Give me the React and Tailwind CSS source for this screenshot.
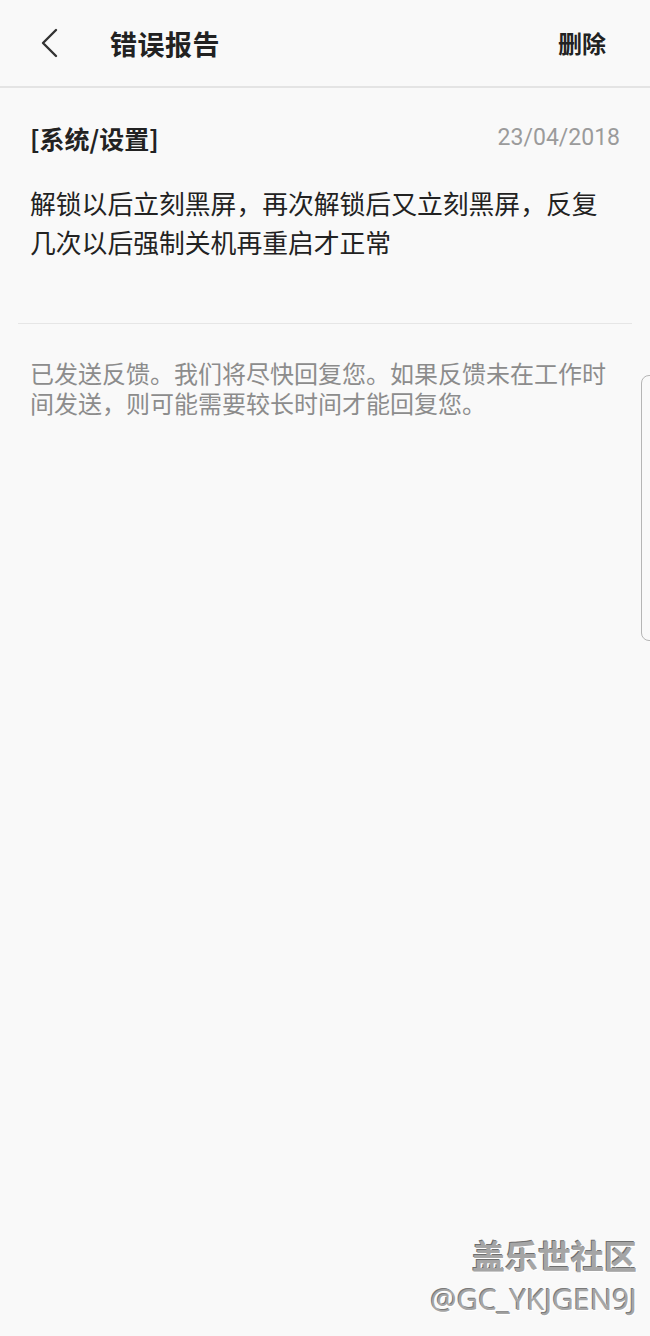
export default function App() {
  return (
    <div
      className="relative flex min-h-[1336px] w-[650px] flex-col overflow-hidden bg-[#f9f9f9] text-[#222]"
      style={{ fontFamily: '"Noto Sans CJK SC", "Noto Sans", sans-serif' }}
    >
      {/* Header */}
      <header className="flex h-[88px] items-center border-b-2 border-[#e4e4e4] pl-[38px] pr-[44px]">
        <svg width="22" height="32" viewBox="0 0 22 32" fill="none" className="-mt-[1px]">
          <path d="M18 3 L5 16 L18 29" stroke="#333" strokeWidth="2.4" strokeLinecap="round" strokeLinejoin="round" />
        </svg>
        <h1 className="ml-[50px] text-[27px] font-bold leading-none tracking-[0.5px] text-[#222]">错误报告</h1>
        <button className="ml-auto text-[24px] font-bold leading-none text-[#222]">删除</button>
      </header>

      {/* Report */}
      <section className="mx-[18px] border-b border-[#e6e6e6] px-[12px] pb-[62px] pt-[33px]">
        <div className="flex items-center justify-between">
          <span className="text-[25px] font-bold leading-[34px]">[系统/设置]</span>
          <span className="text-[23px] leading-[34px] text-[#9b9b9b]" style={{ fontFamily: 'Roboto, "Noto Sans", sans-serif' }}>
            23/04/2018
          </span>
        </div>
        <p className="mt-[28px] w-[580px] text-[25.8px] leading-[39px] text-[#222]">
          解锁以后立刻黑屏，再次解锁后又立刻黑屏，反复几次以后强制关机再重启才正常
        </p>
      </section>

      <p className="mt-[34px] w-[622px] pl-[30px] text-[24px] leading-[30px] text-[#8c8c8c]">
        已发送反馈。我们将尽快回复您。如果反馈未在工作时间发送，则可能需要较长时间才能回复您。
      </p>

      {/* Scroll indicator */}
      <div className="absolute right-[-8px] top-[375px] h-[266px] w-[17px] rounded-lg border border-[#b5b5b5]" />

      {/* Watermark */}
      <div className="mt-auto flex flex-col items-end pb-[19px] pr-[13px] text-[#a5a5a5]">
        <span className="text-[33px] font-bold leading-[44px] [text-shadow:1px_1px_0_#ffffff,-1px_-1px_0_#6f6f6f]">盖乐世社区</span>
        <span
          className="mt-[4px] text-[29.5px] leading-[36px] [text-shadow:1px_1px_0_#ffffff,-1px_-1px_0_#7a7a7a]"
          style={{ fontFamily: '"Open Sans", "Noto Sans", sans-serif' }}
        >
          @GC_YKJGEN9J
        </span>
      </div>
    </div>
  );
}
